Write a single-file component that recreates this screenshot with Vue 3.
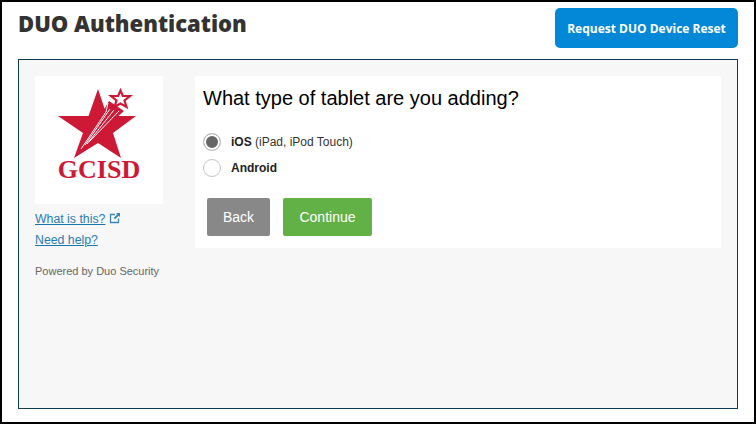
<template>
  <div class="frame">
    <header class="top">
      <h1 class="title">DUO Authentication</h1>
      <button class="reset-btn">Request DUO Device Reset</button>
    </header>

    <section class="panel">
      <aside class="side">
        <div class="logo">
          <svg width="128" height="128" viewBox="0 0 128 128">
            <path class="red" d="M63 13 L72 40 L101 40 L78 57 L86 82 L63 67 L39 82 L48 57 L23 40 L53.500 40 Z" />
            <path class="red" d="M46 73 L74 25 L89 35 Z" />
            <g stroke="#fff" stroke-width="1" fill="none">
              <path d="M46 73 L71 36 L73 27" />
              <path d="M50 69 L75 33" />
              <path d="M52 68 L79 34" />
              <path d="M54 66 L84 35" />
            </g>
            <path class="small-star" d="M85.500 14.500 L87.800 20 L95 20 L89.500 24.500 L91.500 31 L85.500 27.500 L79.500 31 L81.500 24.500 L76 20 L83.200 20 Z" />
            <text class="logo-text" x="64" y="102" text-anchor="middle">GCISD</text>
          </svg>
        </div>
        <div class="side-links">
          <div class="link-row">
            <a class="link">What is this?</a>
            <svg class="ext" width="12" height="12" viewBox="0 0 12 12">
              <path d="M6 2.500 H1.500 V10.500 H9.500 V6.500" fill="none" stroke="#3a86ba" stroke-width="1.300" />
              <path d="M7 1 H11 V5 L9.700 3.700 L6 7.300 L4.700 6 L8.300 2.300 Z" fill="#3a86ba" />
            </svg>
          </div>
          <a class="link">Need help?</a>
        </div>
        <p class="powered">Powered by Duo Security</p>
      </aside>

      <main class="card">
        <h2 class="question">What type of tablet are you adding?</h2>
        <div class="options">
          <label v-for="opt in options" :key="opt.name" class="option">
            <input v-model="choice" class="radio" type="radio" :value="opt.name" />
            <span class="opt-label"><b>{{ opt.name }}</b>{{ opt.note }}</span>
          </label>
        </div>
        <div class="actions">
          <button class="btn back">Back</button>
          <button class="btn next">Continue</button>
        </div>
      </main>
    </section>
  </div>
</template>

<script setup>
import { ref } from 'vue'

const options = [
  { name: 'iOS', note: ' (iPad, iPod Touch)' },
  { name: 'Android', note: '' },
]
const choice = ref('iOS')
</script>

<style>
html, body { margin: 0; background: #fff; }
</style>

<style scoped>
.frame {
  width: 756px; height: 424px; box-sizing: border-box;
  border: 2px solid #000; background: #fff; padding: 6px 16px 13px;
  display: flex; flex-direction: column; gap: 11px; overflow: hidden;
  font-family: "Liberation Sans", Arial, sans-serif;
}
.top { display: flex; justify-content: space-between; align-items: flex-start; height: 40px; }
.title {
  margin: 2px 0 0; font: 800 22px/26px "Open Sans", sans-serif; color: #333;
}
.reset-btn {
  width: 183px; height: 40px; border: none; border-radius: 5px; background: #0388d8;
  color: #fff; font: 700 12px "Open Sans", sans-serif; padding: 0;
}
.panel {
  flex: 1; box-sizing: border-box; border: 1px solid #0d3b56; background: #f7f7f7;
  padding: 16px; display: flex; gap: 32px; align-items: flex-start;
}
.side { width: 128px; flex: none; }
.logo { width: 128px; height: 128px; background: #fff; }
.logo svg { display: block; }
.red { fill: #cd1836; }
.small-star { fill: #fff; stroke: #cd1836; stroke-width: 2.200; }
.logo-text { font: 700 26px "Liberation Serif", serif; fill: #cd1836; }
.side-links { margin-top: 8px; display: flex; flex-direction: column; gap: 7px; font-size: 12.300px; line-height: 14px; }
.link-row { display: flex; align-items: center; gap: 4px; }
.link { color: #2a7cb4; text-decoration: underline; text-decoration-color: #1b75ad; }
.ext { margin-top: -2px; }
.powered { margin: 18px 0 0; font-size: 11px; line-height: 13px; color: #666; white-space: nowrap; }
.card {
  width: 526px; height: 172px; box-sizing: border-box; background: #fff; padding: 9px 8px;
}
.question { margin: 0; font: 400 20px/26px "Liberation Sans", sans-serif; color: #000; }
.options { margin-top: 22px; display: flex; flex-direction: column; gap: 8px; }
.option { display: flex; align-items: center; gap: 10px; height: 18px; font-size: 12px; color: #333; }
.opt-label b { color: #222; }
.radio {
  appearance: none; margin: 0; width: 18px; height: 18px; box-sizing: border-box;
  border: 1px solid #c4c4c4; border-radius: 50%; background: #fff;
}
.radio:checked { background: #666; box-shadow: inset 0 0 0 2px #fff; }
.actions { margin-top: 21px; margin-left: 4px; display: flex; gap: 13px; }
.btn {
  height: 38px; border: none; border-radius: 2px; color: #fff;
  font: 400 14px "Liberation Sans", sans-serif; padding: 0;
}
.back { width: 63px; background: #888; }
.next { width: 89px; background: #62b146; }
</style>
